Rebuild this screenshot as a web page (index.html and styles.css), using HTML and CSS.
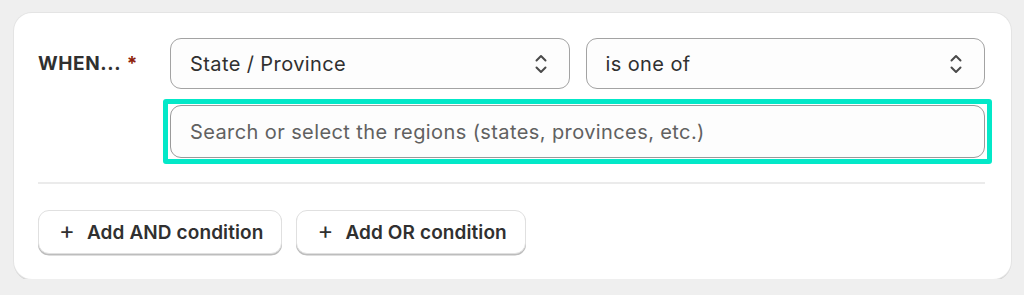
FILE: index.html
```html
<!DOCTYPE html>
<html lang="en">
<head>
    <meta charset="UTF-8">
    <meta name="viewport" content="width=device-width, initial-scale=1.0">
    <title>Condition</title>
    <link rel="stylesheet" href="styles.css">
</head>
<body>
    <div class="card">
        <div class="rule">
            <div class="rule-label">WHEN... <span class="required">*</span></div>

            <div class="select">
                <span>State / Province</span>
                <svg class="select-icon" width="12" height="20" viewBox="0 0 12 20"><path d="M1.5 6.5 L6 2 L10.5 6.5 M1.5 13.5 L6 18 L10.5 13.5" fill="none" stroke="#4a4a4a" stroke-width="2" stroke-linecap="round" stroke-linejoin="round"/></svg>
            </div>

            <div class="select">
                <span>is one of</span>
                <svg class="select-icon" width="12" height="20" viewBox="0 0 12 20"><path d="M1.5 6.5 L6 2 L10.5 6.5 M1.5 13.5 L6 18 L10.5 13.5" fill="none" stroke="#4a4a4a" stroke-width="2" stroke-linecap="round" stroke-linejoin="round"/></svg>
            </div>

            <!-- focused search field -->
            <div class="search-focus">
                <input type="text" class="search" placeholder="Search or select the regions (states, provinces, etc.)">
            </div>
        </div>

        <hr class="divider">

        <div class="actions">
            <button class="btn"><span class="plus">+</span>Add AND condition</button>
            <button class="btn"><span class="plus">+</span>Add OR condition</button>
        </div>
    </div>
</body>
</html>
```

FILE: styles.css
```css
body {
    margin: 0;
    padding: 13px 13px 0 14px;
    background: #efefef;
    font-family: Inter, "Noto Sans", sans-serif;
    color: #303030;
}
.card {
    background: #fff;
    border-radius: 18px;
    box-shadow: 0 0 0 1px #e4e4e4, 0 2px 0 #d2d2d2;
    padding: 25px 26px 25px 24px;
    height: 266px;
    box-sizing: border-box;
}
.rule {
    display: grid;
    grid-template-columns: 116px 1fr 1fr;
    column-gap: 16px;
    row-gap: 10px;
}
.rule-label {
    align-self: center;
    font-size: 19px;
    font-weight: 700;
    letter-spacing: 0.6px;
}
.required {
    color: #8e1f0b;
    margin-left: 1px;
}
.select {
    height: 51px;
    box-sizing: border-box;
    border: 1.5px solid #a3a3a3;
    border-radius: 11px;
    background: #fdfdfd;
    display: flex;
    align-items: center;
    justify-content: space-between;
    padding: 0 22px 0 19px;
    font-size: 20px;
    letter-spacing: 0.4px;
}
.search-focus {
    grid-column: 2 / 4;
    margin: 0 -7px;
    border: 5px solid #03e8c8;
    border-radius: 3px;
    padding: 1px 2px;
}
.search {
    display: block;
    width: 100%;
    height: 53px;
    box-sizing: border-box;
    border: 1.5px solid #9a9a9a;
    border-radius: 11px;
    background: #fdfdfd;
    padding: 0 19px;
    font-family: inherit;
    font-size: 20px;
    letter-spacing: 0.4px;
    color: #303030;
    outline: none;
}
.search::placeholder {
    color: #616161;
}
.divider {
    border: none;
    border-top: 2px solid #ebebeb;
    margin: 18px 0 26px 0;
}
.actions {
    display: flex;
    gap: 14px;
}
.btn {
    height: 44px;
    padding: 0 18px 0 20px;
    background: #fff;
    border: 1.5px solid #e0e0e0;
    border-radius: 11px;
    box-shadow: 0 1.5px 0 #bdbdbd;
    font-family: inherit;
    font-size: 19px;
    font-weight: 600;
    letter-spacing: 0.1px;
    color: #303030;
    display: flex;
    align-items: center;
}
.plus {
    font-weight: 400;
    font-size: 24px;
    margin-right: 12px;
    line-height: 1;
    position: relative;
    top: -1px;
}
```
